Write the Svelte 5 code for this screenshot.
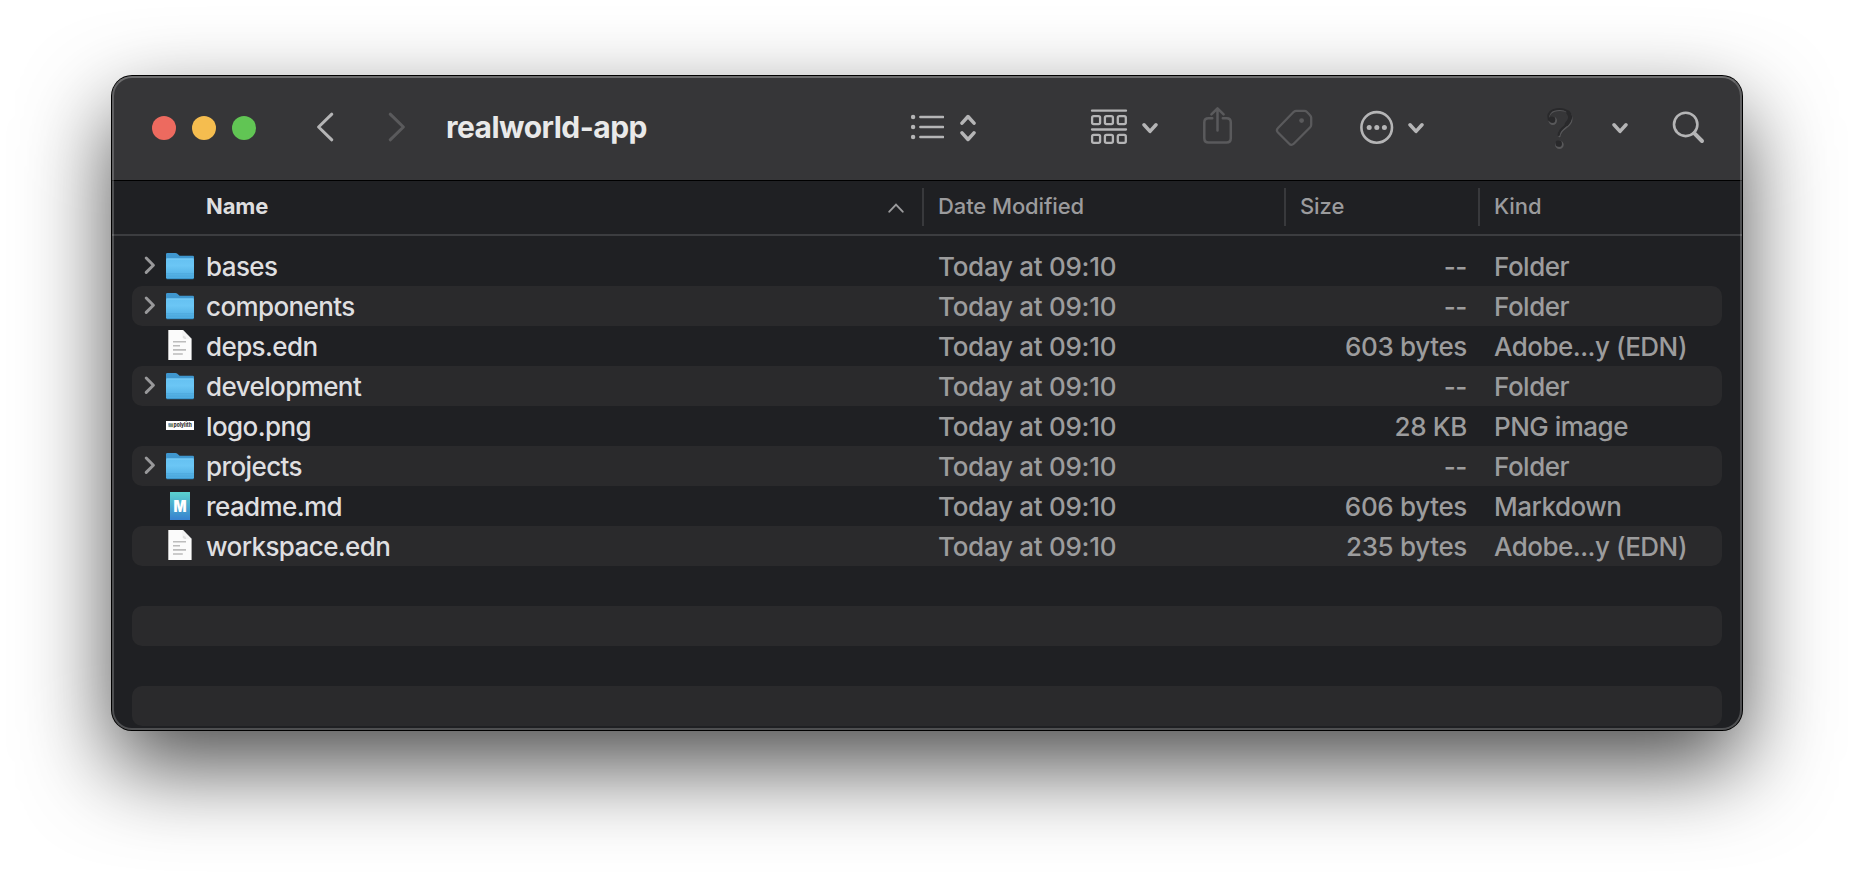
<script>
  const files = [
    { name: 'bases', icon: 'folder', size: '--', kind: 'Folder' },
    { name: 'components', icon: 'folder', size: '--', kind: 'Folder' },
    { name: 'deps.edn', icon: 'doc', size: '603 bytes', kind: 'Adobe...y (EDN)' },
    { name: 'development', icon: 'folder', size: '--', kind: 'Folder' },
    { name: 'logo.png', icon: 'image', size: '28 KB', kind: 'PNG image' },
    { name: 'projects', icon: 'folder', size: '--', kind: 'Folder' },
    { name: 'readme.md', icon: 'markdown', size: '606 bytes', kind: 'Markdown' },
    { name: 'workspace.edn', icon: 'doc', size: '235 bytes', kind: 'Adobe...y (EDN)' },
    null,
    null,
    null,
    null
  ];
</script>

{#snippet chevron()}
  <svg class="chev" width="16" height="56" viewBox="0 0 16 56"><path d="M2 24.8 8 31.4 14 24.8" /></svg>
{/snippet}

{#snippet fileIcon(kind)}
  <svg class="file-icon" width="32" height="40" viewBox="0 0 32 40">
    {#if kind === 'folder'}
      <path d="M2 8.2Q2 7 3.2 7H11.5Q12.6 7 13.4 7.8L15.6 9.8H28.8Q30 9.8 30 11V30H2Z" fill="#3f97cf" />
      <path d="M2 14Q2 12.6 3.2 12.6H28.8Q30 12.6 30 14V31.6Q30 33 28.8 33H3.2Q2 33 2 31.6Z" fill="url(#folder-front)" />
      <path d="M2.5 13H29.5" stroke="#82d3fa" stroke-width=".9" />
      <path d="M2 27.8H30M2 30H30" stroke="#469fd3" stroke-width=".6" />
      <path d="M2.6 32.8H29.4" stroke="#3188bd" stroke-width=".8" />
    {:else if kind === 'doc'}
      <path d="M4.3 4H18.8L27.6 13V34H4.3Z" fill="#fbfbfb" />
      <path d="M18.8 4V11.2Q19.2 13 21 13H27.6Z" fill="#dfdfdf" />
      <path d="M18.8 4V9.5L21.5 10.8L22.3 13H27.6Z" fill="#f4f4f4" />
      <path d="M9 15.7H22M9 19.8H16M9 23.9H22M9 28H18.8" stroke="#bcbcbc" stroke-width="1.6" />
    {:else if kind === 'image'}
      <rect x="2" y="15" width="28" height="9" fill="#fff" />
      <rect x="4.5" y="17.3" width="4.5" height="3.8" fill="#7f9682" />
      <rect x="4.5" y="17.3" width="2" height="2" fill="#6e8fc0" />
      <text x="9.6" y="20.9" class="mini" textLength="18.2" lengthAdjust="spacingAndGlyphs">polylith</text>
    {:else}
      <rect x="6" y="6" width="20" height="28" fill="url(#md-fill)" />
      <text x="16" y="26" class="md" text-anchor="middle" textLength="13" lengthAdjust="spacingAndGlyphs">M</text>
    {/if}
  </svg>
{/snippet}

<svg class="defs" width="0" height="0" aria-hidden="true">
  <defs>
    <linearGradient id="folder-front" x1="0" y1="0" x2="0" y2="1">
      <stop offset="0" stop-color="#65c1f2" />
      <stop offset=".35" stop-color="#6bc6f5" />
      <stop offset="1" stop-color="#4cabe0" />
    </linearGradient>
    <linearGradient id="md-fill" x1="0" y1="0" x2="0" y2="1">
      <stop offset="0" stop-color="#5bd3cf" />
      <stop offset="1" stop-color="#3781cf" />
    </linearGradient>
  </defs>
</svg>

<main class="desktop">
  <section class="window">
    <header class="toolbar">
      <div class="lights">
        <span class="light close"></span>
        <span class="light minimize"></span>
        <span class="light zoom"></span>
      </div>
      <svg class="back" width="18" height="56" viewBox="316 100 18 56"><path d="M331.8 114.2 318.6 127 331.8 139.8" /></svg>
      <svg class="forward dim" width="18" height="56" viewBox="388 100 18 56"><path d="M390.2 114.2 403.4 127 390.2 139.8" /></svg>
      <h1>realworld-app</h1>
      <svg class="list" width="34" height="56" viewBox="910 100 34 56">
        <g class="solid"><circle cx="913.1" cy="117" r="2.2" /><circle cx="913.1" cy="127" r="2.2" /><circle cx="913.1" cy="137" r="2.2" /></g>
        <path d="M920.4 117H943M920.4 127H943M920.4 137H943" />
      </svg>
      <svg class="updown" width="16" height="56" viewBox="960 100 16 56"><path d="M962 123.2 968 116.5 974 123.2M962 132.8 968 139.5 974 132.8" /></svg>
      <svg class="group" width="38" height="56" viewBox="1090 100 38 56">
        <path d="M1092 110.7H1126M1092 129.5H1126" />
        {#each [116.1, 134.9] as y}
          {#each [1092.1, 1104.9, 1117.8] as x}
            <rect {x} {y} width="8" height="8" rx="1.6" />
          {/each}
        {/each}
      </svg>
      <div class="group-menu">{@render chevron()}</div>
      <svg class="share dim" width="30" height="56" viewBox="1203 100 30 56">
        <path d="M1212.3 118.3H1208.6Q1204.3 118.3 1204.3 122.4V138.3Q1204.3 142.6 1208.6 142.6H1226.5Q1230.8 142.6 1230.8 138.3V122.4Q1230.8 118.3 1226.5 118.3H1222.8M1217.5 130.5V108.8M1211.4 114.4 1217.5 108.3 1223.6 114.4" />
      </svg>
      <svg class="tag dim" width="38" height="56" viewBox="1275 100 38 56">
        <path d="M1293.8 111.8Q1294.9 110.9 1296.2 110.9H1304.4Q1305.8 110.9 1306.7 111.8L1310.1 115.3Q1311.2 116.3 1311.2 117.8V124.7Q1311.2 126.2 1310.2 127.2L1293.7 143.7Q1291.4 146 1289.2 143.7L1278 132.5Q1275.8 130.2 1278 128Z" />
        <circle class="hole" cx="1301.6" cy="120.6" r="2.4" />
      </svg>
      <svg class="more" width="34" height="56" viewBox="1360 100 34 56">
        <circle cx="1376.7" cy="127.4" r="15.3" />
        <g class="solid"><circle cx="1369.2" cy="127.4" r="2.5" /><circle cx="1376.8" cy="127.4" r="2.5" /><circle cx="1384.4" cy="127.4" r="2.5" /></g>
      </svg>
      <div class="more-menu">{@render chevron()}</div>
      <svg class="help" width="28" height="56" viewBox="1546 100 28 56">
        <g transform="translate(.5 1)" class="relief">
          <path d="M1549.3 120.2C1546 114.5 1550.5 108.9 1559.5 108.9C1567 108.9 1571 113 1571 118.2C1571 126.5 1559.6 126.8 1559 135.3" />
          <circle cx="1552.3" cy="119.8" r="3.2" /><circle cx="1558.9" cy="143.7" r="3.3" />
        </g>
        <g class="face">
          <path d="M1549 119.8C1546.5 114 1551 109 1559.5 109C1567 109 1570.3 113 1570.3 118C1570.3 126 1559.2 126.6 1558.7 135" />
          <path class="thick" d="M1568.2 112.7C1571.3 116 1570.3 120.5 1566.6 124.1" />
          <circle cx="1552.1" cy="119.5" r="3.2" /><circle cx="1558.7" cy="143.4" r="3.2" />
        </g>
      </svg>
      <div class="help-menu">{@render chevron()}</div>
      <svg class="search" width="34" height="56" viewBox="1672 100 34 56"><circle cx="1685.7" cy="124.4" r="11.7" /><path d="M1694.2 133.2 1702 141" /></svg>
    </header>

    <div class="columns">
      <div class="col name-col">
        <span>Name</span>
        <svg width="16" height="12" viewBox="0 0 16 12"><path d="M1.3 9.7 8 2.7 14.7 9.7" /></svg>
      </div>
      <div class="col">Date Modified</div>
      <div class="col">Size</div>
      <div class="col">Kind</div>
    </div>

    <div class="rows">
      {#each files as file}
        <div class="row">
          {#if file}
            <div class="cell name">
              <span class="disclosure">
                {#if file.icon === 'folder'}
                  <svg width="12" height="20" viewBox="0 0 12 20"><path d="M2.2 3 9.4 10.2 2.2 17.4" /></svg>
                {/if}
              </span>
              {@render fileIcon(file.icon)}
              <span class="label">{file.name}</span>
            </div>
            <div class="cell date">Today at 09:10</div>
            <div class="cell size">{file.size}</div>
            <div class="cell kind">{file.kind}</div>
          {/if}
        </div>
      {/each}
    </div>
    <div class="rim"></div>
  </section>
</main>

<style>
  :global(body) {
    margin: 0;
    background: #fff;
    overflow: hidden;
  }
  .defs {
    position: absolute;
  }
  .desktop {
    box-sizing: border-box;
    width: 1854px;
    height: 878px;
    padding: 76px 112px 148px;
    font-family: Inter, 'Liberation Sans', sans-serif;
    overflow: hidden;
  }
  .window {
    position: relative;
    width: 1630px;
    height: 654px;
    border-radius: 20px;
    background: #1f2023;
    box-shadow:
      0 0 0 1px #000,
      0 36px 88px rgba(0, 0, 0, 0.7);
  }
  .rim {
    position: absolute;
    inset: 0;
    border-radius: 20px;
    border: 2px solid rgba(255, 255, 255, 0.21);
    border-top-color: rgba(255, 255, 255, 0.27);
    pointer-events: none;
  }
  .toolbar {
    display: flex;
    align-items: center;
    height: 104px;
    border-bottom: 1px solid #000;
    border-radius: 20px 20px 0 0;
    background: #363638;
  }
  .toolbar svg {
    flex: none;
    display: block;
    fill: none;
    stroke: #b5b5b6;
    stroke-width: 2.6;
    stroke-linecap: round;
    stroke-linejoin: round;
  }
  .toolbar .dim {
    stroke: #5a5a5c;
  }
  .toolbar .solid {
    fill: #b5b5b6;
    stroke: none;
  }
  .toolbar .hole {
    fill: #5a5a5c;
    stroke: none;
  }
  .toolbar .chev,
  .toolbar .updown {
    stroke-width: 3.5;
  }
  .toolbar .back,
  .toolbar .forward {
    stroke-width: 3;
  }
  .lights {
    display: flex;
    gap: 16px;
    margin-left: 40px;
  }
  .light {
    width: 24px;
    height: 24px;
    border-radius: 50%;
  }
  .close {
    background: #ed6a5f;
  }
  .minimize {
    background: #f5bd4f;
  }
  .zoom {
    background: #61c554;
  }
  .back {
    margin-left: 60px;
  }
  .forward {
    margin-left: 54px;
  }
  h1 {
    box-sizing: border-box;
    width: 504px;
    margin: 0;
    padding: 0 0 2px 40px;
    font-size: 30px;
    line-height: 40px;
    font-weight: 700;
    letter-spacing: -0.52px;
    white-space: nowrap;
    color: #e9e9e9;
  }
  .updown {
    margin-left: 16px;
  }
  .toolbar .group {
    margin-left: 114px;
    stroke-width: 2.3;
  }
  .group-menu {
    margin-left: 14px;
  }
  .toolbar .share {
    margin-left: 45px;
    stroke-width: 2.5;
  }
  .toolbar .tag {
    margin-left: 42px;
    stroke-width: 2.3;
  }
  .more {
    margin-left: 47px;
  }
  .more-menu {
    margin-left: 14px;
  }
  .help {
    margin-left: 122px;
  }
  .toolbar .relief {
    stroke: #58585a;
    fill: none;
    stroke-width: 2;
  }
  .toolbar .face {
    stroke: #29292b;
    stroke-width: 2.2;
  }
  .face circle {
    fill: #29292b;
    stroke: none;
  }
  .toolbar .face .thick {
    stroke-width: 4;
  }
  .help-menu {
    margin-left: 38px;
  }
  .search {
    margin-left: 44px;
  }
  .toolbar .search path {
    stroke-width: 4;
  }
  .columns {
    display: grid;
    grid-template-columns: 810px 362px 194px 1fr;
    box-sizing: border-box;
    height: 55px;
    padding-top: 7px;
    border-bottom: 2px solid #3c3d40;
    color: #9b9b9d;
    font-size: 22px;
    font-weight: 500;
    letter-spacing: -0.1px;
    line-height: 36px;
  }
  .col {
    box-sizing: border-box;
    height: 38px;
    padding-left: 14px;
    border-left: 2px solid #38393c;
    white-space: nowrap;
  }
  .name-col {
    display: flex;
    justify-content: space-between;
    padding: 0 18px 0 94px;
    border-left: 0;
    color: #dededf;
    font-weight: 700;
  }
  .name-col svg {
    fill: none;
    stroke: #9b9b9d;
    stroke-width: 1.9;
    stroke-linecap: round;
    margin-top: 14px;
  }
  .rows {
    height: 492px;
    padding: 10px 20px 0;
    box-sizing: border-box;
  }
  .row {
    display: grid;
    grid-template-columns: 806px 345px 184px 1fr;
    height: 40px;
    border-radius: 10px;
    font-size: 26px;
    font-weight: 450;
    line-height: 41px;
    color: #9c9c9d;
    white-space: nowrap;
  }
  .row:nth-child(even) {
    background: #2a2a2c;
  }
  .name {
    display: flex;
    align-items: flex-start;
    height: 40px;
    color: #dfdfe0;
    letter-spacing: -0.6px;
  }
  .label {
    margin-left: 10px;
  }
  .disclosure {
    width: 20px;
    height: 20px;
    padding-left: 12px;
    margin-top: 9px;
    flex: none;
  }
  .disclosure svg {
    display: block;
    fill: none;
    stroke: #98989a;
    stroke-width: 3;
    stroke-linecap: round;
    stroke-linejoin: round;
  }
  .file-icon {
    flex: none;
    letter-spacing: 0;
  }
  .date {
    letter-spacing: -0.28px;
  }
  .size {
    text-align: right;
    letter-spacing: -0.35px;
  }
  .kind {
    padding-left: 27px;
    letter-spacing: -0.5px;
  }
  .mini {
    font-size: 5.5px;
    font-weight: 800;
    fill: #333;
  }
  .md {
    font-size: 16.5px;
    font-weight: 900;
    fill: #fff;
  }
</style>
